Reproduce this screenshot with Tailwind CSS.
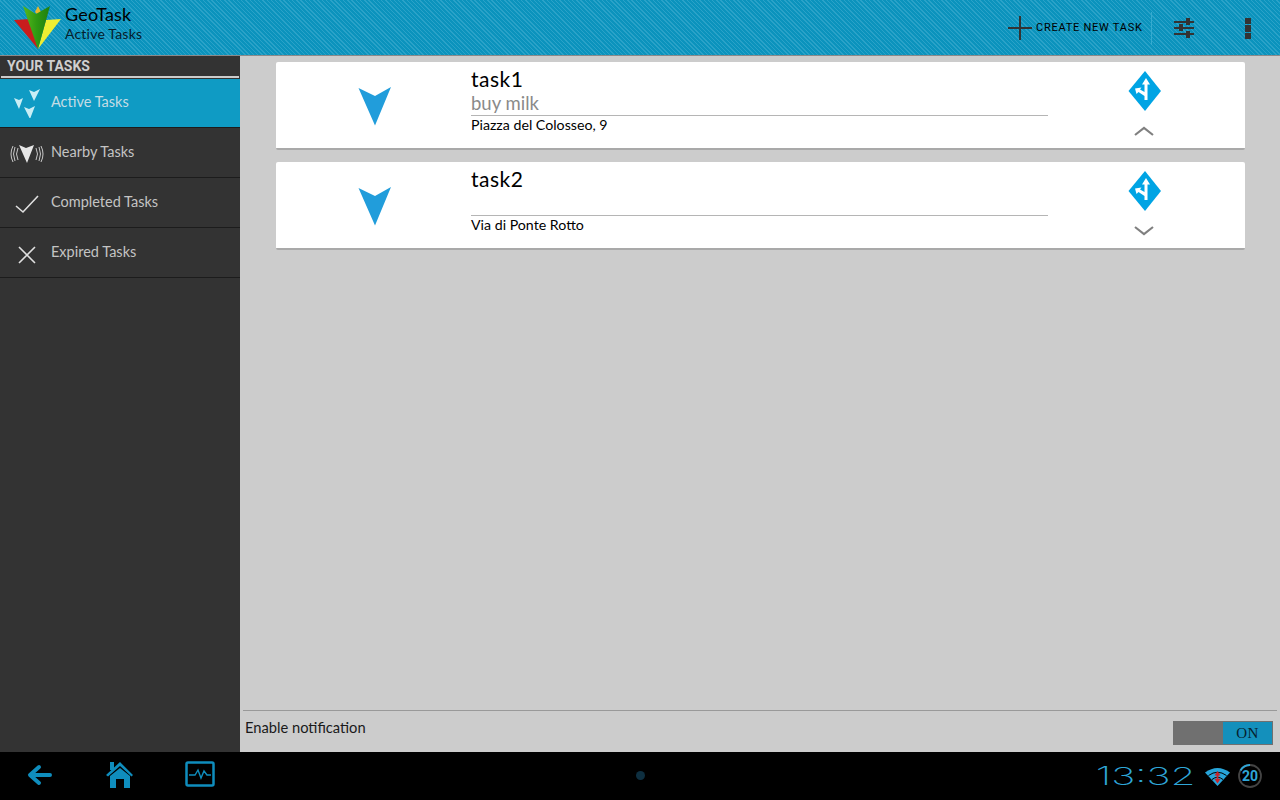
<!DOCTYPE html>
<html lang="en">
<head>
  <meta charset="UTF-8">
  <title>GeoTask</title>
  <script src="https://cdn.jsdelivr.net/npm/@tailwindcss/browser@4"></script>
</head>
<body class="w-[1280px] h-[800px] overflow-hidden bg-[#cccccc] font-['Lato',sans-serif]">
  <div class="flex flex-col h-[800px]">

    <!-- Action bar -->
    <header class="h-[56px] shrink-0 flex items-center border-b border-[#8a8a8a] bg-[#0b93bd] bg-[repeating-linear-gradient(45deg,#0b93bd_0px,#0b93bd_2px,#2aa2c8_2px,#2aa2c8_3px)]">
      <svg class="ml-[14px] shrink-0 -mt-[1px]" width="48" height="45" viewBox="14 4 48 45">
        <defs>
          <linearGradient id="logoGreen" x1="0" y1="0" x2="1" y2="0">
            <stop offset="0" stop-color="#58b81c"/>
            <stop offset="0.5" stop-color="#2f9a12"/>
            <stop offset="1" stop-color="#1f7d0e"/>
          </linearGradient>
        </defs>
        <polygon points="14,19 30,18 38,48" fill="#c91d1d"/>
        <polygon points="61,18 46,19 38,48" fill="#eeee33"/>
        <polygon points="38,5 35,11 38,14 41,11" fill="#e8b92c"/>
        <polygon points="23,5 36,13 50,5 38,48" fill="url(#logoGreen)"/>
      </svg>
      <div class="ml-[3px] -mt-[8px] flex flex-col text-[#06202c]">
        <span class="text-[18px] leading-[20px] tracking-[0.2px] text-black">GeoTask</span>
        <span class="text-[14px] leading-[19px] tracking-[0.2px]">Active Tasks</span>
      </div>
      <div class="ml-auto mt-[1px] flex items-center">
        <svg width="24" height="24" viewBox="0 0 24 24" class="mr-[4px]"><path d="M0 12H24M12 0V24" stroke="#333" stroke-width="2"/></svg>
        <span class="font-['Roboto',sans-serif] text-[11px] tracking-[0.75px] whitespace-nowrap text-black w-[107px] mt-[1px]">CREATE NEW TASK</span>
        <div class="w-px h-[33px] bg-[#35abd0] ml-[8px]"></div>
        <svg width="20" height="20" viewBox="0 0 20 20" class="ml-[22px]" fill="#333">
          <rect x="0" y="3" width="20" height="2"/><rect x="0" y="9" width="20" height="2"/><rect x="0" y="15" width="20" height="2"/>
          <rect x="12" y="0" width="4" height="7"/><rect x="5" y="6" width="4" height="7"/><rect x="12" y="13" width="4" height="7"/>
        </svg>
        <div class="ml-[51px] mr-[29px] flex flex-col gap-[1px]">
          <div class="w-[6px] h-[6px] bg-[#333]"></div>
          <div class="w-[6px] h-[7px] bg-[#333]"></div>
          <div class="w-[6px] h-[6px] bg-[#333]"></div>
        </div>
      </div>
    </header>

    <div class="flex flex-1 min-h-0">
      <!-- Sidebar -->
      <aside class="w-[240px] shrink-0 bg-[#333333]">
        <div class="h-[20px] pl-[7px] flex items-center font-['Roboto',sans-serif] font-bold text-[14px] text-[#cfcfcf]">YOUR TASKS</div>
        <div class="h-[2px] mx-px bg-[#cccccc]"></div>
        <div class="h-[49px] mt-px flex items-center pl-[51px] pb-[3px] relative bg-[#0f9bc4] border-b border-[#1c1c1c] text-[14.5px] text-[#c5dde5]">
          <svg class="absolute left-[13px] top-[9px]" width="30" height="30" viewBox="0 0 30 30" fill="#c9eef5">
            <path d="M1 10L6 12L10 10L6 21Z"/><path d="M16 2L21 4L27 1L21 13Z"/><path d="M11 19L16 21L22 18L17 31Z"/>
          </svg>
          Active Tasks
        </div>
        <div class="h-[50px] flex items-center pl-[51px] pb-[1px] relative border-b border-[#1c1c1c] text-[14.5px] text-[#c4c4c4]">
          <svg class="absolute left-[10px] top-[16px]" width="34" height="20" viewBox="0 0 34 20" fill="none" stroke="#d8d8d8" stroke-width="0.9">
            <path d="M9 1L16 4L24 1L17 19Z" fill="#e6e6e6" stroke="none"/>
            <path d="M8 4Q5 10 8 16M5 3Q2 10 5 17M3 2Q-1 10 3 18M26 4Q29 10 26 16M29 3Q32 10 29 17M31 2Q35 10 31 18"/>
          </svg>
          Nearby Tasks
        </div>
        <div class="h-[50px] flex items-center pl-[51px] pb-[1px] relative border-b border-[#1c1c1c] text-[14.5px] text-[#c4c4c4]">
          <svg class="absolute left-[15px] top-[16px]" width="24" height="20" viewBox="0 0 24 20" fill="none" stroke="#e0e0e0" stroke-width="1.6"><path d="M1 12L8 18L23 2"/></svg>
          Completed Tasks
        </div>
        <div class="h-[50px] flex items-center pl-[51px] pb-[1px] relative border-b border-[#1c1c1c] text-[14.5px] text-[#c4c4c4]">
          <svg class="absolute left-[18px] top-[18px]" width="18" height="18" viewBox="0 0 18 18" fill="none" stroke="#e0e0e0" stroke-width="1.6"><path d="M1 1L17 17M17 1L1 17"/></svg>
          Expired Tasks
        </div>
      </aside>

      <!-- Task list -->
      <main class="flex-1 flex flex-col min-w-0">
        <div class="flex-1 pl-[36px] pr-[35px] pt-[6px] flex flex-col gap-[12px]">

          <div class="h-[88px] bg-white rounded-[2px] border-b-2 border-[#a9a9a9] flex">
            <div class="w-[195px] shrink-0 flex items-center justify-center">
              <svg width="34" height="39" viewBox="0 0 34 39" fill="#219ddb" class="ml-[3px] mt-[2px]"><path d="M0.5 1L17 9L33 0L17 38.5Z"/></svg>
            </div>
            <div class="w-[577px] shrink-0 flex flex-col">
              <div class="h-[25px] pt-[4px] text-[21px] leading-[25px] text-black tracking-[0.5px]">task1</div>
              <div class="h-[29px] pt-[5px] text-[18.5px] leading-[23px] text-[#8a8a8a] border-b border-[#b5b5b5]">buy milk</div>
              <div class="-mt-px text-[14.2px] leading-[20px] text-black">Piazza del Colosseo, 9</div>
            </div>
            <div class="flex-1 flex flex-col items-center">
              <svg width="34" height="40" viewBox="0 0 34 40" class="mt-[9px] mr-[4px]">
                <path d="M17 0L33 20L17 40L0.5 20Z" fill="#00a4e4"/>
                <path d="M18 7L14 13.5H16.5V21L12 18.5L13.5 16.5L7 17.5L8.5 23L10.5 21L16.5 25V29H19.5V13.5H22Z" fill="#fff"/>
              </svg>
              <svg width="20" height="10" viewBox="0 0 20 10" class="mt-[15px] mr-[6px]" fill="none" stroke="#808080" stroke-width="2.2"><path d="M1 9L10 2L19 9"/></svg>
            </div>
          </div>

          <div class="h-[88px] bg-white rounded-[2px] border-b-2 border-[#a9a9a9] flex">
            <div class="w-[195px] shrink-0 flex items-center justify-center">
              <svg width="34" height="39" viewBox="0 0 34 39" fill="#219ddb" class="ml-[3px] mt-[2px]"><path d="M0.5 1L17 9L33 0L17 38.5Z"/></svg>
            </div>
            <div class="w-[577px] shrink-0 flex flex-col">
              <div class="h-[25px] pt-[4px] text-[21px] leading-[25px] text-black tracking-[0.5px]">task2</div>
              <div class="h-[29px] border-b border-[#b5b5b5]"></div>
              <div class="-mt-px text-[14.2px] leading-[20px] text-black">Via di Ponte Rotto</div>
            </div>
            <div class="flex-1 flex flex-col items-center">
              <svg width="34" height="40" viewBox="0 0 34 40" class="mt-[9px] mr-[4px]">
                <path d="M17 0L33 20L17 40L0.5 20Z" fill="#00a4e4"/>
                <path d="M18 7L14 13.5H16.5V21L12 18.5L13.5 16.5L7 17.5L8.5 23L10.5 21L16.5 25V29H19.5V13.5H22Z" fill="#fff"/>
              </svg>
              <svg width="20" height="10" viewBox="0 0 20 10" class="mt-[15px] mr-[6px]" fill="none" stroke="#808080" stroke-width="2.2"><path d="M1 1L10 8L19 1"/></svg>
            </div>
          </div>
        </div>

        <!-- Notification toggle -->
        <div class="h-[42px] shrink-0 mx-[3px] border-t border-[#999999] flex items-center justify-between pl-[2px] pr-[4px]">
          <span class="text-[14.7px] text-[#1a1a1a] -mt-[9px]">Enable notification</span>
          <div class="w-[100px] h-[24px] mt-[3px] bg-[#707070] p-px flex justify-end">
            <div class="w-[49px] bg-[#1490bc] flex items-center justify-center text-[15px] tracking-[0.5px] text-[#06202c] font-['Liberation_Serif',serif]">ON</div>
          </div>
        </div>
      </main>
    </div>

    <!-- System bar -->
    <footer class="h-[48px] shrink-0 bg-black flex items-center relative">
      <svg width="26" height="24" viewBox="0 0 26 24" class="ml-[27px]" fill="none" stroke="#0f8dbd" stroke-width="4" stroke-linecap="round" stroke-linejoin="round"><path d="M23 11H5M12 3L3 11L12 19"/></svg>
      <svg width="28" height="28" viewBox="0 0 28 28" class="ml-[53px] -mt-[3px]" fill="#0f8dbd">
        <path d="M0 14L14 1L27 14L25.5 15.5L14 5L2 15.5Z"/><rect x="4" y="1" width="4" height="8"/>
        <path d="M4 15L14 7L24 15V27H18V18H10V27H4Z"/>
      </svg>
      <svg width="30" height="26" viewBox="0 0 30 26" class="ml-[51px] -mt-[4px]" fill="none" stroke="#0f8dbd">
        <rect x="1.5" y="1.5" width="27" height="23" rx="1.5" stroke-width="2.5"/>
        <path d="M4 14H10L13 9L16 17L19 10L22 14H26" stroke-width="1.4"/>
      </svg>
      <div class="absolute left-[636px] top-[19px] w-[9px] h-[9px] rounded-full bg-[#0e2f40]"></div>
      <div class="ml-auto flex items-center">
        <span class="font-['Inter',sans-serif] font-extralight text-[25px] leading-none text-[#2fa6d8] mr-[9px] origin-right scale-x-[1.62]">13:32</span>
        <svg width="25" height="19" viewBox="0 0 25 19" class="mr-[7px]">
          <path d="M0 5.5Q12.5 -3.5 25 5.5L12.5 19Z" fill="#27a5da"/>
          <path d="M3.5 8.5Q12.5 2 21.5 8.5M7 12.5Q12.5 8 18 12.5" stroke="#000" fill="none"/>
          <path d="M12.5 4L15.5 8.5H13.5V12H15.5L12.5 16.5L9.5 12H11.5V8.5H9.5Z" fill="#c9262c"/>
        </svg>
        <svg width="26" height="26" viewBox="0 0 26 26" class="mr-[17px]">
          <circle cx="13" cy="13" r="11" fill="none" stroke="#444" stroke-width="1.8"/>
          <path d="M13 2A11 11 0 0 0 3.5 7.5" fill="none" stroke="#2fa6d8" stroke-width="1.8"/>
          <text x="13" y="18" text-anchor="middle" font-family="Roboto" font-weight="700" font-size="14" fill="#2fa6d8">20</text>
        </svg>
      </div>
    </footer>
  </div>
</body>
</html>
